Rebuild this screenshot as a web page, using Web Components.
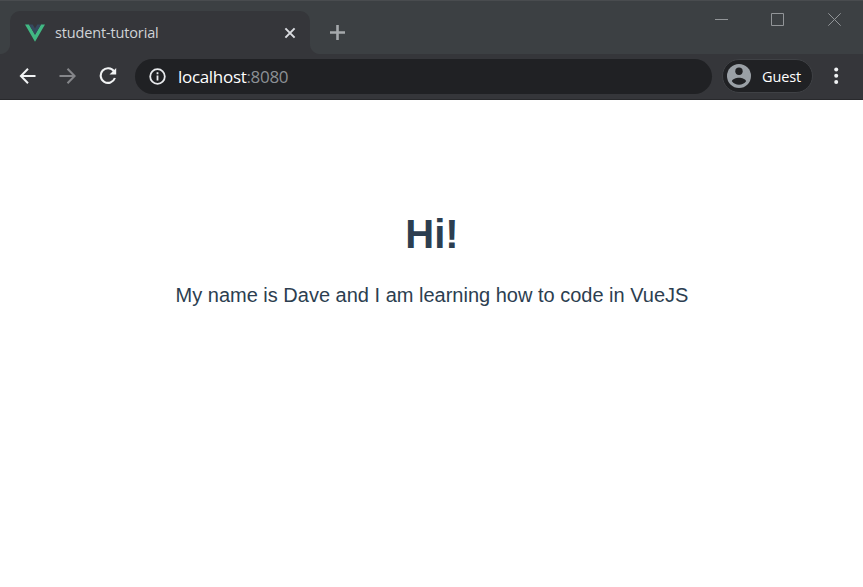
<!DOCTYPE html>
<html lang="en">
<head>
<meta charset="utf-8">
<title>student-tutorial</title>
<style>
html,body{margin:0;height:100%;background:#fff;overflow:hidden}
</style>
</head>
<body>
<browser-window>
  <tab-strip slot="tabs"><browser-tab>student-tutorial</browser-tab></tab-strip>
  <tool-bar slot="toolbar">
    <address-box>localhost<span slot="port">:8080</span></address-box>
    <profile-chip>Guest</profile-chip>
  </tool-bar>
  <student-page><span slot="title">Hi!</span>My name is Dave and I am learning how to code in VueJS</student-page>
</browser-window>
<script>
function define(name, html){
  const t=document.createElement('template');
  t.innerHTML=html;
  customElements.define(name, class extends HTMLElement{
    constructor(){
      super();
      this.attachShadow({mode:'open'}).append(t.content.cloneNode(true));
    }
  });
}
define('browser-window',`<style>
:host{display:flex;flex-direction:column;height:100vh;font-family:"Open Sans","Noto Sans",sans-serif}
</style><slot name="tabs"></slot><slot name="toolbar"></slot><slot></slot>`);

define('browser-tab',`<style>
:host{display:flex;align-items:center;box-sizing:border-box;width:300px;height:43px;padding:0 13px 0 15px;background:#35363a;border-radius:10px 10px 0 0;color:#d0d3d6;font-size:14.5px;position:relative}
:host::before,:host::after{content:"";position:absolute;bottom:0;width:10px;height:10px}
:host::before{left:-10px;background:radial-gradient(circle at 0 0,transparent 9.5px,#35363a 10.5px)}
:host::after{right:-10px;background:radial-gradient(circle at 100% 0,transparent 9.5px,#35363a 10.5px)}
svg{display:block;flex:none}
.t{flex:1;margin-left:10px;line-height:20px;letter-spacing:-.15px;white-space:nowrap}
</style>
<svg width="20" height="18" viewBox="0 0 20 18"><path fill="#41b883" d="M0 .5h4L10 10.700 16 .5h4L10 17.800z"/><path fill="#35495e" d="M4 .5h3.700L10 4.400 12.300.5H16L10 10.700z"/></svg>
<span class="t"><slot></slot></span>
<svg width="14" height="14" viewBox="0 0 14 14"><path d="M2.400 2.400l9.200 9.200m0-9.200l-9.200 9.200" stroke="#dadce0" stroke-width="2" fill="none"/></svg>`);

define('tab-strip',`<style>
:host{display:flex;align-items:flex-end;box-sizing:border-box;height:54px;flex:none;background:#3c4043;border-top:1px solid #494c4f;padding-left:10px}
svg{display:block}
.plus{margin:0 0 14px 20px}
.controls{margin-left:auto;align-self:flex-start;display:flex;gap:43px;padding:12px 22px 0 0}
.controls svg:first-child{margin-right:0}
</style>
<slot></slot>
<svg class="plus" width="15" height="15" viewBox="0 0 15 15"><path d="M7.500 0v15M0 7.500h15" stroke="#a5a9ac" stroke-width="2.600"/></svg>
<div class="controls">
<svg width="13" height="13" viewBox="0 0 13 13"><path d="M0 6.500h13" stroke="#929598"/></svg>
<svg width="13" height="13" viewBox="0 0 13 13"><path d="M.5.5h12v12H.5z" stroke="#929598" fill="none"/></svg>
<svg width="14" height="13" viewBox="0 0 14 13"><path d="M1.300.3l12.400 12.400M13.700.3L1.300 12.700" stroke="#929598" fill="none"/></svg>
</div>`);

define('tool-bar',`<style>
:host{display:flex;align-items:center;box-sizing:border-box;height:46px;flex:none;background:#35363a;border-bottom:1px solid #28292c;padding:0 24px 0 19px}
svg{display:block;flex:none}
.nav{display:flex;gap:22px;width:116px;flex:none;margin-top:-1px}
.dots{margin:-1px 0 0 21px}
</style>
<div class="nav">
<svg width="18" height="18" viewBox="0 0 18 18"><path d="M16.500 9H2M9 1.700L1.900 9 9 16.300" stroke="#f1f3f4" stroke-width="2" fill="none"/></svg>
<svg width="18" height="18" viewBox="0 0 18 18"><path d="M.5 9H15M8.500 1.700L15.600 9l-7.100 7.300" stroke="#85868a" stroke-width="2" fill="none"/></svg>
<svg width="18" height="18" viewBox="0 0 18 18"><path d="M15 4.400A7.300 7.300 0 1 0 15.900 11" stroke="#f1f3f4" stroke-width="2.100" fill="none"/><path d="M17.200 1v6.500H10.500z" fill="#f1f3f4"/></svg>
</div>
<slot></slot>
<svg class="dots" width="5" height="18" viewBox="0 0 5 18" fill="#f1f3f4"><circle cx="2.200" cy="2.500" r="2"/><circle cx="2.200" cy="8.700" r="2"/><circle cx="2.200" cy="14.900" r="2"/></svg>`);

define('address-box',`<style>
:host{display:flex;align-items:center;flex:1;height:35px;border-radius:18px;background:#202124;color:#fff;padding-left:14px;font-size:17px;letter-spacing:-.31px;white-space:nowrap}
svg{display:block;margin-right:12px}
.port{color:#8c9095}
.u{line-height:24px}
</style>
<svg width="17" height="17" viewBox="0 0 17 17"><circle cx="8.500" cy="8.500" r="7.300" stroke="#e8eaed" stroke-width="1.800" fill="none"/><path d="M8.500 4.300v1.900M8.500 7.600v5" stroke="#e8eaed" stroke-width="1.800"/></svg>
<span class="u"><slot></slot><span class="port"><slot name="port"></slot></span></span>`);

define('profile-chip',`<style>
:host{display:flex;align-items:center;flex:none;box-sizing:border-box;width:91px;height:34px;margin:-1px 0 0 10px;border:1px solid #3f4145;border-radius:17px;background:#202124;color:#fff;padding-left:4px;font-size:14.5px;letter-spacing:-.15px}
svg{display:block;flex:none;margin-right:11px}
</style>
<svg width="24" height="24" viewBox="0 0 24 24"><circle cx="12" cy="12" r="12" fill="#9aa0a6"/><circle cx="12" cy="7.300" r="3.700" fill="#202124"/><path d="M12 13.700c-2.900 0-6.800 1.300-7.100 3.500 1.500 2.200 4.200 3.500 7.100 3.500s5.600-1.300 7.100-3.500c-.3-2.200-4.200-3.500-7.100-3.500z" fill="#202124"/></svg>
<slot></slot>`);

define('student-page',`<style>
:host{display:block;flex:1;background:#fff;color:#2c3e50;text-align:center;font-family:"Liberation Sans",Arial,sans-serif;padding:111px 0 0 1px}
h1{margin:0;font-size:40px;line-height:46px}
p{margin:27px 0 0;font-size:20px;line-height:23px}
</style><h1><slot name="title"></slot></h1><p><slot></slot></p>`);
</script>
</body>
</html>
